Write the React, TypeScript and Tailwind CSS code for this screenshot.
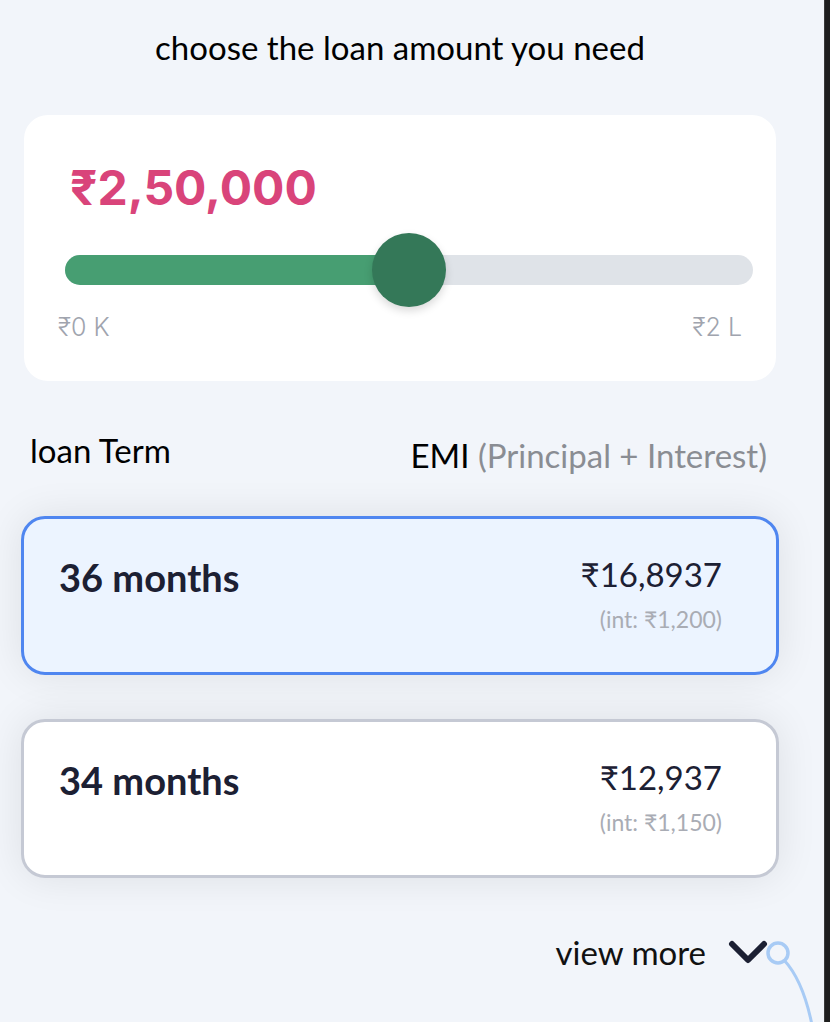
import React from 'react'

interface Term {
  months: number
  emi: string
  interest: string
  selected: boolean
}

const terms: Term[] = [
  { months: 36, emi: '₹16,8937', interest: '₹1,200', selected: true },
  { months: 34, emi: '₹12,937', interest: '₹1,150', selected: false },
]

export default function App() {
  const progress = 50

  return (
    <div className="flex w-[830px] h-[1022px] overflow-hidden">
      <div className="relative w-[824px] shrink-0 bg-[#f2f5fa] flex flex-col" style={{ fontFamily: 'Lato, "Noto Sans", sans-serif' }}>

        {/* Title */}
        <h1 className="mt-[28px] text-center text-[33px] leading-[38px] text-black pr-[24px]">
          choose the loan amount you need
        </h1>

        {/* Amount card */}
        <div className="mt-[49px] ml-[24px] mr-[48px] h-[266px] bg-white rounded-[24px] pt-[48px]">
          <p
            className="ml-[46px] text-[48px] leading-[50px] font-bold text-[#d9447a]"
            style={{ fontFamily: 'Inter, Roboto, sans-serif' }}
          >
            ₹2,50,000
          </p>
          <div className="relative mt-[20px] ml-[41px] w-[688px] h-[74px] flex items-center">
            <div className="w-full h-[30px] rounded-full bg-[#dfe3e8] overflow-hidden">
              <div className="h-full bg-[#479e72]" style={{ width: `${progress}%` }} />
            </div>
            <div
              className="absolute top-0 w-[74px] h-[74px] rounded-full bg-[#347858] shadow-[0_4px_8px_rgba(0,0,0,0.15)]"
              style={{ left: `calc(${progress}% - 37px)` }}
            />
          </div>
          <div
            className="mt-[6px] px-[34px] flex justify-between text-[25px] leading-[28px] font-light text-[#a0a4ae]"
            style={{ fontFamily: 'Inter, Roboto, sans-serif' }}
          >
            <span>₹0 K</span>
            <span>₹2 L</span>
          </div>
        </div>

        {/* Header row */}
        <div className="mt-[50px] pl-[30px] pr-[57px] flex justify-between items-start">
          <span className="text-[33px] leading-[38px] text-black">loan Term</span>
          <span className="mt-[5px] text-[33px] leading-[38px] text-black">
            EMI <span className="text-[#8a8d93]">(Principal + Interest)</span>
          </span>
        </div>

        {/* Term options */}
        <div className="mt-[42px] ml-[21px] mr-[45px] flex flex-col gap-[44px]">
          {terms.map(t => (
            <div
              key={t.months}
              className={`h-[159px] rounded-[24px] border-[3px] pl-[35px] pr-[54px] pt-[36px] flex justify-between shadow-[0_0_40px_rgba(0,0,0,0.09)] ${
                t.selected ? 'border-[#4f86f0] bg-[#ecf4ff]' : 'border-[#c5c9d4] bg-white'
              }`}
            >
              <span className="text-[38px] leading-[44px] font-bold text-[#1c2033]">{t.months} months</span>
              <div className="flex flex-col items-end">
                <span className="text-[33px] leading-[38px] text-[#1c2033]">{t.emi}</span>
                <span className="mt-[13px] text-[23px] leading-[26px] text-[#a9acb4]">(int: {t.interest})</span>
              </div>
            </div>
          ))}
        </div>

        {/* View more */}
        <div className="mt-[55px] pr-[56px] flex justify-end items-center gap-[22px]">
          <span className="text-[33px] leading-[38px] text-[#111]">view more</span>
          <svg width="40" height="26" viewBox="0 0 40 26" fill="none">
            <path d="M4 5 L20 21 L36 5" stroke="#1c2033" strokeWidth="6" strokeLinecap="round" strokeLinejoin="round" />
          </svg>
        </div>

        {/* decorative connector */}
        <svg className="absolute left-[760px] top-[935px]" width="64" height="87" viewBox="0 0 64 87" fill="none">
          <path d="M24 25 C 36 38, 46 60, 52 90" stroke="#a8cbf5" strokeWidth="3" fill="none" />
          <circle cx="18" cy="18" r="10" stroke="#a8cbf5" strokeWidth="3.5" fill="#f2f5fa" />
        </svg>
      </div>
      <div className="w-[6px] shrink-0 h-full bg-[#1e1e1e] border-l border-[#3a3a3a]" />
    </div>
  )
}
